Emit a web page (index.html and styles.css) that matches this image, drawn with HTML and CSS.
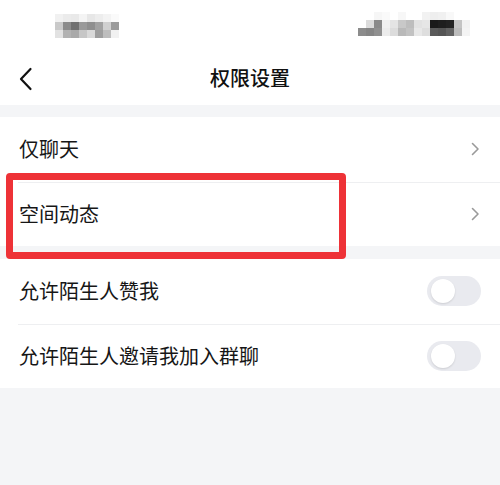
FILE: index.html
```html
<!DOCTYPE html>
<html lang="zh-CN">
<head>
<meta charset="utf-8">
<title>权限设置</title>
<link rel="stylesheet" href="styles.css">
</head>
<body>
<div class="page">
  <header class="top">
    <div class="status">
      <div class="mosaic mosaic-left">
        <span style="background:#f1f1f1"></span><span style="background:#ebebeb"></span><span style="background:#e9e9e9"></span><span style="background:#f4f4f4"></span><span style="background:#e7e7e7"></span><span style="background:#ededed"></span><span style="background:#f3f3f3"></span><span style="background:#fafafa"></span>
        <span style="background:#c9c9c9"></span><span style="background:#8b8b8b"></span><span style="background:#707070"></span><span style="background:#9a9a9a"></span><span style="background:#8f8f8f"></span><span style="background:#a2a2a2"></span><span style="background:#d0d0d0"></span><span style="background:#9b9b9b"></span>
        <span style="background:#e2e2e2"></span><span style="background:#b2b2b2"></span><span style="background:#a9a9a9"></span><span style="background:#c6c6c6"></span><span style="background:#d9d9d9"></span><span style="background:#9e9e9e"></span><span style="background:#bdbdbd"></span><span style="background:#f1f1f1"></span>
      </div>
      <div class="mosaic mosaic-right">
        <span style="background:#fff"></span><span style="background:#fff"></span><span style="background:#f6f6f6"></span><span style="background:#fafafa"></span><span style="background:#fff"></span><span style="background:#f7f7f7"></span><span style="background:#fff"></span><span style="background:#fff"></span><span style="background:#f2f2f2"></span><span style="background:#eeeeee"></span><span style="background:#f0f0f0"></span><span style="background:#f8f8f8"></span><span style="background:#fff"></span><span style="background:#fff"></span>
        <span style="background:#fff"></span><span style="background:#dcdcdc"></span><span style="background:#8a8a8a"></span><span style="background:#f0f0f0"></span><span style="background:#e4e4e4"></span><span style="background:#c8c8c8"></span><span style="background:#bdbdbd"></span><span style="background:#e2e2e2"></span><span style="background:#e6e6e6"></span><span style="background:#1a1a1a"></span><span style="background:#1e1e1e"></span><span style="background:#222"></span><span style="background:#c4c4c4"></span><span style="background:#f2f2f2"></span>
        <span style="background:#8c8c8c"></span><span style="background:#858585"></span><span style="background:#909090"></span><span style="background:#ececec"></span><span style="background:#dcdcdc"></span><span style="background:#b9b9b9"></span><span style="background:#c2c2c2"></span><span style="background:#e8e8e8"></span><span style="background:#dedede"></span><span style="background:#5a5a5a"></span><span style="background:#555"></span><span style="background:#626262"></span><span style="background:#bcbcbc"></span><span style="background:#f4f4f4"></span>
      </div>
    </div>
    <nav class="navbar">
      <span class="back" aria-label="返回">
        <svg width="14" height="24" viewBox="0 0 14 24"><path d="M11.5 2 L2 12 L11.5 22" fill="none" stroke="#111" stroke-width="2.2" stroke-linecap="round" stroke-linejoin="round"/></svg>
      </span>
      <h1 class="title">权限设置</h1>
    </nav>
  </header>

  <section class="group first">
    <div class="row">
      <span class="label">仅聊天</span>
      <svg class="chev" width="9" height="14" viewBox="0 0 9 14"><path d="M1.5 1.5 L7 7 L1.5 12.5" fill="none" stroke="#9a9a9a" stroke-width="1.6" stroke-linecap="round" stroke-linejoin="round"/></svg>
    </div>
    <div class="row">
      <span class="label">空间动态</span>
      <svg class="chev" width="9" height="14" viewBox="0 0 9 14"><path d="M1.5 1.5 L7 7 L1.5 12.5" fill="none" stroke="#9a9a9a" stroke-width="1.6" stroke-linecap="round" stroke-linejoin="round"/></svg>
    </div>
  </section>

  <section class="group">
    <div class="row">
      <span class="label">允许陌生人赞我</span>
      <span class="toggle"><span class="knob"></span></span>
    </div>
    <div class="row">
      <span class="label">允许陌生人邀请我加入群聊</span>
      <span class="toggle"><span class="knob"></span></span>
    </div>
  </section>

  <div class="highlight"></div>
</div>
</body>
</html>
```

FILE: styles.css
```css
* { box-sizing: border-box; }
html, body { margin: 0; padding: 0; }
body {
  background: #f4f5f7;
  font-family: "Noto Sans CJK SC", "Noto Sans", sans-serif;
  color: #161616;
}
.page {
  position: relative;
  width: 500px;
  min-height: 485px;
  background: #f4f5f7;
}
.top {
  background: #fff;
  height: 105px;
}
.status {
  height: 52px;
  display: flex;
  justify-content: space-between;
  padding-top: 14px;
}
.mosaic {
  display: grid;
  grid-template-rows: repeat(3, 8px);
  height: 24px;
}
.mosaic span { display: block; }
.mosaic-left {
  margin-left: 55px;
  grid-template-columns: repeat(8, 8px);
}
.mosaic-right {
  margin-right: 30px;
  grid-template-columns: repeat(14, 8px);
  margin-top: -2px;
}
.navbar {
  position: relative;
  height: 53px;
  display: flex;
  align-items: center;
  justify-content: center;
}
.back {
  position: absolute;
  left: 19px;
  top: 15px;
  width: 14px;
  height: 24px;
  display: flex;
}
.title {
  margin: 0;
  font-size: 20px;
  font-weight: 500;
  line-height: 26px;
  color: #111;
  margin-top: -1px;
}
.group {
  background: #fff;
  margin-top: 12px;
}
.group + .group { margin-top: 13px; }
.row {
  height: 64.5px;
  display: flex;
  align-items: center;
  justify-content: space-between;
  padding: 0 19px 0 19px;
  position: relative;
}
.row + .row::before {
  content: "";
  position: absolute;
  left: 18px;
  right: 0;
  top: 0;
  height: 1px;
  background: #eeeff1;
}
.label {
  font-size: 20px;
  line-height: 28px;
  color: #161616;
}
.chev { margin-right: 1px; }
.toggle {
  width: 54px;
  height: 30px;
  border-radius: 15px;
  background: #e9eaef;
  display: flex;
  align-items: center;
  padding-left: 4px;
}
.knob {
  width: 24px;
  height: 24px;
  border-radius: 50%;
  background: #fff;
  box-shadow: 0 1px 2px rgba(0,0,0,0.12);
}
.highlight {
  position: absolute;
  left: 6px;
  top: 173px;
  width: 340px;
  height: 86px;
  border: 7px solid #ee3237;
  border-radius: 4px;
}
```
